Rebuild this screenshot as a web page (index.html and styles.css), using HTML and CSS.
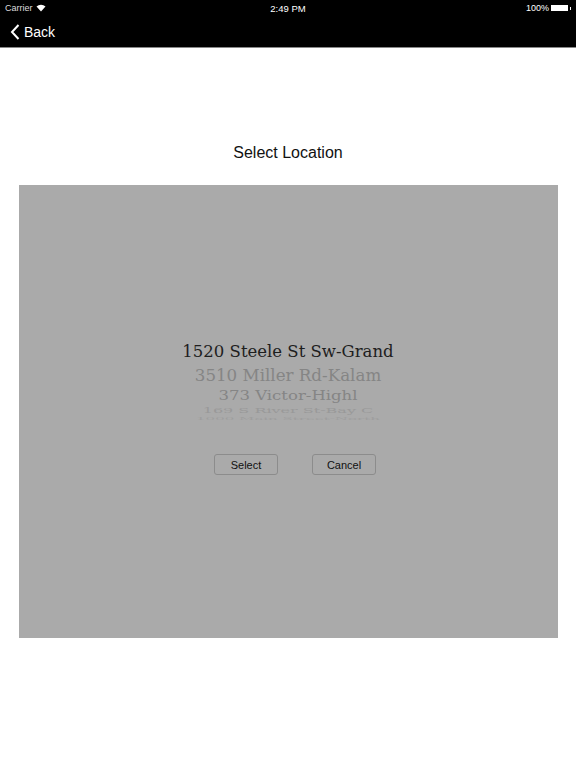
FILE: index.html
```html
<!DOCTYPE html>
<html>
<head>
<meta charset="utf-8">
<link rel="stylesheet" href="styles.css">
</head>
<body>
<header class="bar">
  <div class="status">
    <div class="st-left">Carrier
      <svg class="wifi" width="10" height="8" viewBox="0 0 10 8"><path d="M0.5 2.6 A6.5 6.5 0 0 1 9.5 2.6 L5 7.5 Z" fill="#fff"/></svg>
    </div>
    <div class="st-mid">2:49 PM</div>
    <div class="st-right">100%
      <span class="battery"><span class="bfill"></span></span><span class="bnub"></span>
    </div>
  </div>
  <div class="nav">
    <svg class="chev" width="10" height="16" viewBox="0 0 10 16"><path d="M8.5 1 L2 8 L8.5 15" fill="none" stroke="#fff" stroke-width="2"/></svg>
    <span class="back">Back</span>
  </div>
</header>
<main class="content">
  <h1 class="title">Select Location</h1>
  <section class="panel">
    <div class="picker">
      <div class="row r1">1520 Steele St Sw-Grand</div>
      <div class="row r2">3510 Miller Rd-Kalam</div>
      <div class="row r3">373 Victor-Highl</div>
      <div class="row r4">169 S River St-Bay C</div>
      <div class="row r5">1000 Main Street-North</div>
    </div>
    <div class="buttons">
      <button class="btn">Select</button>
      <button class="btn">Cancel</button>
    </div>
  </section>
</main>
</body>
</html>
```
FILE: styles.css
```css
html, body { margin: 0; padding: 0; background: #fff; }
body { width: 576px; height: 768px; font-family: "Liberation Sans", Arial, sans-serif; }
.bar { background: #000; color: #fff; height: 48px; border-bottom: 1px solid #888; box-sizing: border-box; }
.status { height: 16px; display: flex; align-items: center; justify-content: space-between; padding: 0 5px; font-size: 9px; position: relative; }
.st-left { display: flex; align-items: center; gap: 3px; color: #ddd; }
.st-mid { position: absolute; left: 0; right: 0; text-align: center; font-size: 9.5px; }
.st-right { display: flex; align-items: center; gap: 2px; }
.battery { width: 17px; height: 6px; border: 1px solid #fff; box-sizing: border-box; display: inline-flex; padding: 0; }
.bfill { flex: 1; background: #fff; }
.bnub { width: 1px; height: 3px; background: #fff; }
.nav { height: 31px; display: flex; align-items: center; padding-left: 10px; gap: 4px; }
.back { font-size: 14px; color: #fff; }
.content { display: flex; flex-direction: column; align-items: center; }
.title { font-weight: normal; font-size: 16px; color: #111; margin: 95px 0 0; height: 20px; line-height: 20px; }
.panel { margin-top: 22px; width: 539px; height: 453px; background: #aaaaaa; display: flex; flex-direction: column; align-items: center; }
.picker { margin-top: 155px; display: flex; flex-direction: column; align-items: center; font-family: "DejaVu Serif", serif; height: 82px; overflow: hidden; }
.row { white-space: nowrap; }
.r1 { color: #1e1e1e; height: 24px; line-height: 24px; font-size: 16.5px; }
.r2 { color: #858585; height: 22px; line-height: 22px; font-size: 16.7px; transform: scaleY(0.95); }
.r3 { color: #858585; height: 19px; line-height: 19px; font-size: 16.5px; transform: scaleY(0.78); }
.r4 { color: #999; height: 11px; line-height: 11px; font-size: 16px; transform: scaleY(0.5); }
.r5 { color: #9e9e9e; height: 6px; line-height: 6px; font-size: 15px; transform: scaleY(0.22); }
.buttons { margin-top: 32px; margin-left: 14px; display: flex; gap: 34px; }
.btn { width: 64px; height: 21px; background: transparent; border: 1px solid #8c8c8c; border-radius: 3px; font-family: "Liberation Sans", Arial, sans-serif; font-size: 11px; color: #111; padding: 0; }
```
